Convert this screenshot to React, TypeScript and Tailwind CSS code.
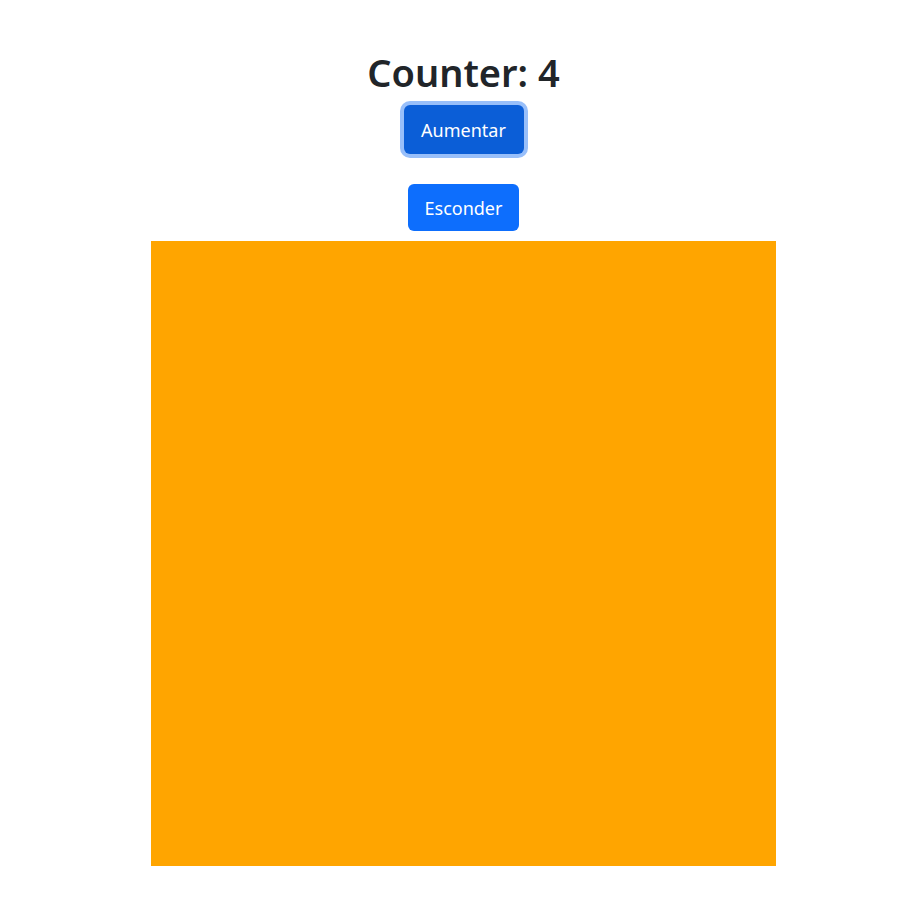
import React, { useState } from 'react';

const App = () => {
    const [count, setCount] = useState(4);
    const [visible, setVisible] = useState(true);

    return (
        <div
            className="flex flex-col items-center pt-12 pl-4 bg-white text-[#212529]"
            style={{ fontFamily: '"Noto Sans", "Open Sans", sans-serif' }}
        >
            <h1 className="text-[38px] leading-[48px] font-semibold">Counter: {count}</h1>
            <button
                onClick={() => setCount(count + 1)}
                className="mt-[9px] h-[49px] w-[120px] rounded-md bg-[#0b5ed7] text-white text-lg ring-4 ring-[#98bffa]"
            >
                Aumentar
            </button>
            <button
                onClick={() => setVisible(!visible)}
                className="mt-[30px] h-[47px] w-[111px] rounded-md bg-[#0d6efd] text-white text-lg"
            >
                Esconder
            </button>
            {visible && <div className="mt-[10px] w-[625px] h-[625px] bg-[#ffa500]" />}
        </div>
    );
};

export default App;
